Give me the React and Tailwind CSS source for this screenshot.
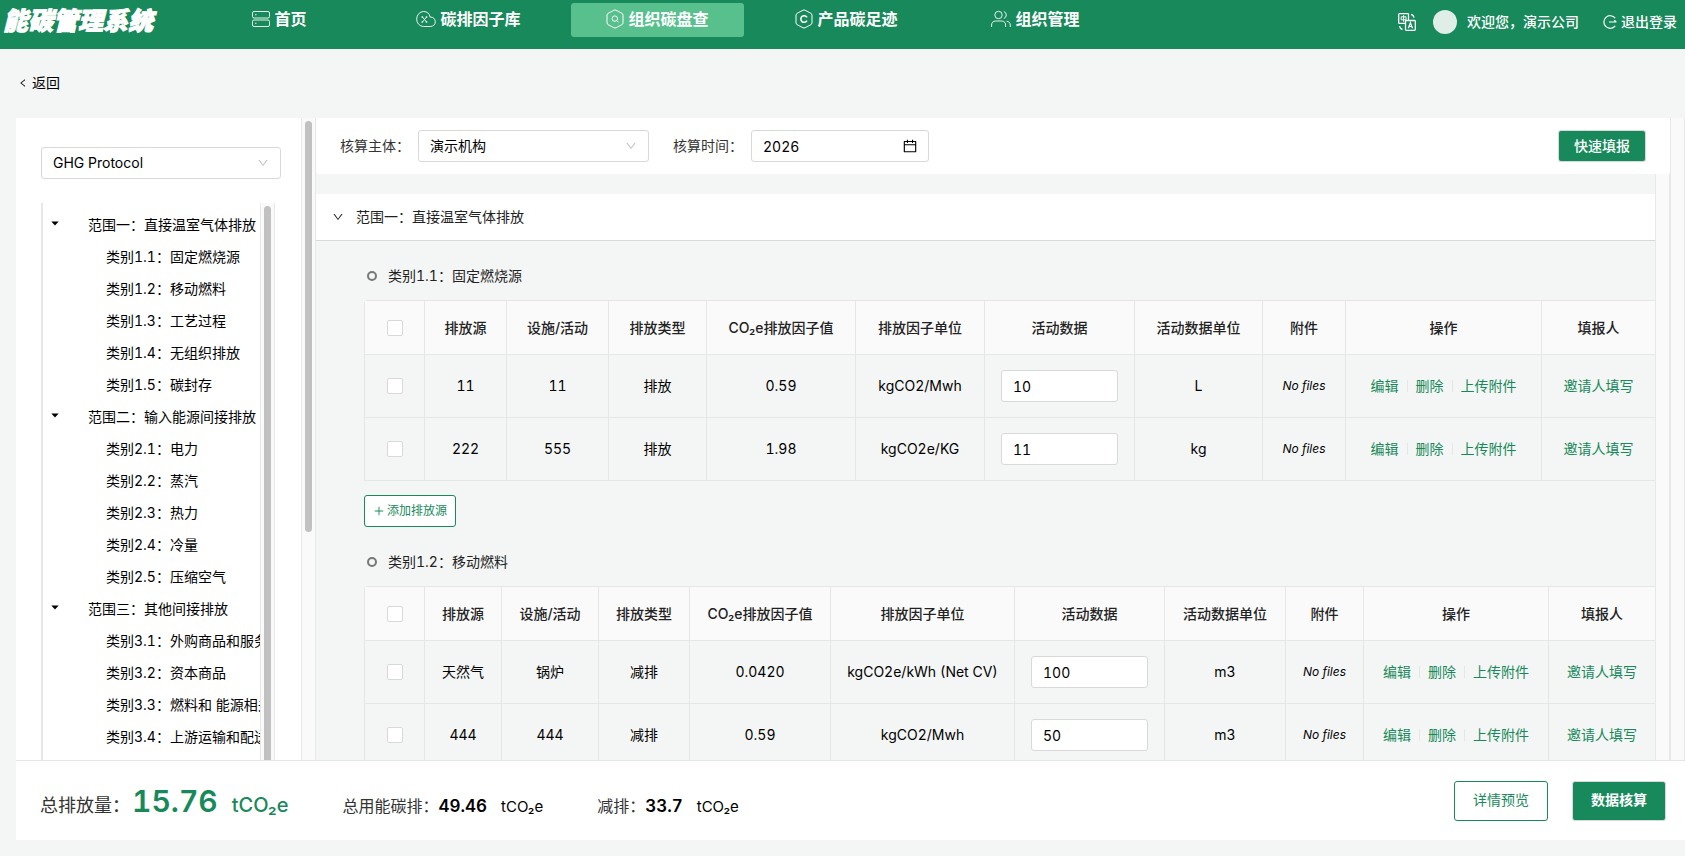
import React from "react";
import { AiOutlineCalendar, AiOutlineDown, AiOutlineLeft, AiOutlinePlus } from "react-icons/ai";

const HomeIcon = () => (
  <svg width="18" height="18" viewBox="0 0 18 18" fill="none" stroke="currentColor" opacity="0.9">
    <rect x="0.5" y="1.5" width="17" height="6.5" rx="1.5" />
    <rect x="0.5" y="10" width="17" height="6.5" rx="1.5" />
    <path d="M3 4.75h1.5M3 13.25h1.5" />
  </svg>
);

const CloudIcon = () => (
  <svg width="20" height="18" viewBox="0 0 20 18" fill="none" stroke="currentColor" opacity="0.9">
    <path d="M7.5 16.5A7 7.2 0 0 1 .7 9a7 7.5 0 0 1 7-7.5c3.300 0 5.800 2 6.300 5.500 3.500 0 5.300 2 5.300 4.800s-2 4.700-5 4.700z" />
    <path d="M6.500 7l4 5M10.500 7l-4 5" />
    <path d="M5.500 7h1.500M9.800 7h1.500M5.500 12h1.500M9.800 12h1.500" strokeWidth="1.300" />
  </svg>
);

const HexSearchIcon = () => (
  <svg width="18" height="20" viewBox="0 0 18 20" fill="none" stroke="currentColor">
    <path d="M8 1.200q1-.5 2 0l6 3.200q1 .6 1 1.700v7.800q0 1.100-1 1.700l-6 3.200q-1 .5-2 0l-6-3.200q-1-.6-1-1.700V6.100q0-1.100 1-1.700z" />
    <circle cx="8.800" cy="9.600" r="2.700" />
    <path d="M10.800 11.600l1.700 1.700" />
  </svg>
);

const HexCarbonIcon = () => (
  <svg width="18" height="20" viewBox="0 0 18 20" fill="none" stroke="currentColor">
    <path d="M8 1.200q1-.5 2 0l6 3.200q1 .6 1 1.700v7.800q0 1.100-1 1.700l-6 3.200q-1 .5-2 0l-6-3.200q-1-.6-1-1.700V6.100q0-1.100 1-1.700z" />
    <path d="M12 8.300A3.300 3.300 0 1 0 12 11.700" strokeWidth="1.600" />
  </svg>
);

const UsersIcon = () => (
  <svg width="20" height="18" viewBox="0 0 20 18" fill="none" stroke="currentColor" opacity="0.9">
    <circle cx="7.500" cy="5" r="3.700" />
    <path d="M.6 17v-2c0-2.500 1.700-4 4-4h6c2.300 0 4 1.500 4 4v2" />
    <path d="M12.800 1.500a3.700 3.700 0 0 1 0 7M15.600 11.200c2.300.4 3.700 1.600 3.700 3.800v2" />
  </svg>
);

const TranslateIcon = () => (
  <svg width="18" height="18" viewBox="0 0 18 18" fill="none" stroke="currentColor" strokeWidth="1.300">
    <path d="M7 10.400H1.500a.8.8 0 0 1-.8-.8V1.500a.8.8 0 0 1 .8-.8h8.200a.8.8 0 0 1 .8.8v5.700" />
    <rect x="7.500" y="7.500" width="9.800" height="9.800" rx="0.800" />
    <path d="M3.200 3.800h4.800v3H3.200zM5.600 2.200v6.600" strokeWidth="1" />
    <path d="M10.300 15.300l2.100-5.600 2.100 5.600M11 13.500h2.800" strokeWidth="1.200" />
    <path d="M13 1.300c1.500.3 2.700 1.500 3 3.300M1.500 13.200c.3 1.700 1.400 2.900 3 3.300" />
  </svg>
);

const LogoutIcon = () => (
  <svg width="14" height="14" viewBox="0 0 14 14" fill="none" stroke="currentColor" strokeWidth="1.200">
    <path d="M12.200 3.200A6.300 6.300 0 1 0 12.200 10.800" />
    <path d="M6 7h7.300M11.300 5.200L13.300 7" />
  </svg>
);

const navItems = [
  { label: "首页", icon: HomeIcon },
  { label: "碳排因子库", icon: CloudIcon },
  { label: "组织碳盘查", icon: HexSearchIcon, active: true },
  { label: "产品碳足迹", icon: HexCarbonIcon },
  { label: "组织管理", icon: UsersIcon },
];

const scopes = [
  {
    title: "范围一：直接温室气体排放",
    items: ["类别1.1：固定燃烧源", "类别1.2：移动燃料", "类别1.3：工艺过程", "类别1.4：无组织排放", "类别1.5：碳封存"],
  },
  {
    title: "范围二：输入能源间接排放",
    items: ["类别2.1：电力", "类别2.2：蒸汽", "类别2.3：热力", "类别2.4：冷量", "类别2.5：压缩空气"],
  },
  {
    title: "范围三：其他间接排放",
    items: ["类别3.1：外购商品和服务", "类别3.2：资本商品", "类别3.3：燃料和 能源相关活动", "类别3.4：上游运输和配送"],
  },
];

const headers = ["排放源", "设施/活动", "排放类型", "CO₂e排放因子值", "排放因子单位", "活动数据", "活动数据单位", "附件", "操作", "填报人"];

const categories = [
  {
    title: "类别1.1：固定燃烧源",
    canAdd: true,
    widths: [60, 82, 102, 98, 149, 129, 150, 128, 83, 196, 114],
    rows: [
      { source: "11", facility: "11", type: "排放", factor: "0.59", factorUnit: "kgCO2/Mwh", amount: "10", unit: "L" },
      { source: "222", facility: "555", type: "排放", factor: "1.98", factorUnit: "kgCO2e/KG", amount: "11", unit: "kg" },
    ],
  },
  {
    title: "类别1.2：移动燃料",
    canAdd: false,
    widths: [60, 77, 97, 91, 141, 184, 150, 121, 78, 185, 107],
    rows: [
      { source: "天然气", facility: "锅炉", type: "减排", factor: "0.0420", factorUnit: "kgCO2e/kWh (Net CV)", amount: "100", unit: "m3" },
      { source: "444", facility: "444", type: "减排", factor: "0.59", factorUnit: "kgCO2/Mwh", amount: "50", unit: "m3" },
    ],
  },
];

const Header = () => (
  <header className="flex h-[49px] shrink-0 items-start bg-[#18895a] pt-[3px] pr-2 text-white">
    <div className="flex h-[38px] w-[193px] shrink-0 items-center pl-[3px] text-[25px] font-black whitespace-nowrap italic [-webkit-text-stroke:1px_white]">
      能碳管理系统
    </div>
    <nav className="flex max-w-[929px] flex-1 gap-4">
      {navItems.map(({ label, icon: Icon, active }) => (
        <a
          key={label}
          href="#"
          className={`flex h-[34px] flex-1 items-center justify-center gap-1 rounded-[3px] pb-[2px] text-base font-bold whitespace-nowrap ${active ? "bg-[#57c08d]" : ""}`}
        >
          <Icon />
          {label}
        </a>
      ))}
    </nav>
    <div className="ml-auto flex h-[38px] items-center text-sm font-medium whitespace-nowrap">
      <button type="button" aria-label="切换语言" className="mr-[17px]">
        <TranslateIcon />
      </button>
      <span className="mr-[10px] size-6 rounded-full bg-[#dfeee6]" />
      <span className="mr-6">欢迎您，演示公司</span>
      <button type="button" className="flex items-center gap-1">
        <LogoutIcon />
        退出登录
      </button>
    </div>
  </header>
);

const SelectBox = ({ id, label, value, className }) => (
  <div className={`relative ${className}`}>
    <select
      id={id}
      aria-label={label}
      className="h-8 w-full appearance-none rounded-[3px] border border-[#d9d9d9] bg-white pl-[11px] pr-8 text-sm text-black outline-none"
    >
      <option>{value}</option>
    </select>
    <AiOutlineDown className="pointer-events-none absolute top-[10px] right-3 size-3 text-[#bfbfbf]" />
  </div>
);

const ScrollTrack = ({ children }) => (
  <div className="w-[15px] shrink-0 border-x border-[#e8e8e8] bg-[#fafafa] px-[3px] pt-[3px]">{children}</div>
);

const Sidebar = () => (
  <aside className="flex w-[285px] shrink-0 flex-col bg-white pt-[29px] pl-[25px]">
    <SelectBox id="standard" label="核算标准" value="GHG Protocol" className="w-[240px] shrink-0" />
    <div className="mt-6 flex min-h-0 w-[234px] flex-1">
      <ul className="min-w-0 flex-1 overflow-hidden border-l-2 border-[#e8e8e8] pt-[6px] text-sm leading-8 whitespace-nowrap text-black">
        {scopes.map((scope) => (
          <li key={scope.title}>
            <div className="flex items-center pl-2">
              <svg width="8" height="5" viewBox="0 0 8 5" className="mr-[29px] mb-1">
                <path d="M0.300 0.500h7.400L4 4.500z" fill="currentColor" />
              </svg>
              {scope.title}
            </div>
            <ul className="pl-[63px]">
              {scope.items.map((item) => (
                <li key={item}>{item}</li>
              ))}
            </ul>
          </li>
        ))}
      </ul>
      <ScrollTrack>
        <div className="h-full rounded-t-full bg-[#c1c1c1]" />
      </ScrollTrack>
    </div>
  </aside>
);

const FilterBar = () => (
  <div className="flex h-14 shrink-0 items-center rounded-b-[3px] bg-white pr-6 pl-6 text-sm">
    <label htmlFor="org" className="mr-2">核算主体：</label>
    <SelectBox id="org" label="核算主体" value="演示机构" className="mr-6 w-[231px]" />
    <label htmlFor="year" className="mr-2">核算时间：</label>
    <div className="relative w-[178px]">
      <input
        id="year"
        type="text"
        defaultValue="2026"
        className="h-8 w-full rounded-[3px] border border-[#d9d9d9] bg-white px-[11px] text-black outline-none"
      />
      <AiOutlineCalendar className="pointer-events-none absolute top-2 right-[11px] size-4 text-black" />
    </div>
    <button type="button" className="ml-auto h-8 rounded-[3px] border border-[#d9d9d9] bg-[#18895a] px-[15px] font-medium text-white">
      快速填报
    </button>
  </div>
);

const Checkbox = ({ label }) => (
  <input
    type="checkbox"
    aria-label={label}
    className="mx-auto block size-4 appearance-none rounded-[2px] border border-[#d9d9d9] bg-white"
  />
);

const cell = "border-r border-b border-[#e5e7e6] p-0 text-center";

const EmissionTable = ({ widths, rows }) => (
  <table className="w-full table-fixed border-separate border-spacing-0 rounded-tl-[4px] border-t border-l border-[#e5e7e6] text-sm whitespace-nowrap">
    <colgroup>
      {widths.map((width, index) => (
        <col key={index} style={{ width }} />
      ))}
    </colgroup>
    <thead className="bg-[#fafafa] text-[#222]">
      <tr className="h-[54px]">
        <th className={cell}>
          <Checkbox label="全选" />
        </th>
        {headers.map((header) => (
          <th key={header} className={`${cell} font-medium`}>{header}</th>
        ))}
      </tr>
    </thead>
    <tbody className="text-black">
      {rows.map((row) => (
        <tr key={row.source} className="h-[63px]">
          <td className={cell}>
            <Checkbox label={row.source} />
          </td>
          <td className={cell}>{row.source}</td>
          <td className={cell}>{row.facility}</td>
          <td className={cell}>{row.type}</td>
          <td className={cell}>{row.factor}</td>
          <td className={cell}>{row.factorUnit}</td>
          <td className={cell}>
            <div className="px-4">
              <input
                type="text"
                aria-label="活动数据"
                defaultValue={row.amount}
                className="block h-8 w-full rounded-[3px] border border-[#d9d9d9] bg-white px-[11px] outline-none"
              />
            </div>
          </td>
          <td className={cell}>{row.unit}</td>
          <td className={`${cell} text-xs italic`}>No files</td>
          <td className={cell}>
            <div className="flex items-center justify-center gap-2 text-[#18895a]">
              <a href="#">编辑</a>
              <span className="h-3 w-px bg-[#e5e7e6]" />
              <a href="#">删除</a>
              <span className="h-3 w-px bg-[#e5e7e6]" />
              <a href="#">上传附件</a>
            </div>
          </td>
          <td className={cell}>
            <a href="#" className="text-[#18895a]">邀请人填写</a>
          </td>
        </tr>
      ))}
    </tbody>
  </table>
);

const Category = ({ title, canAdd, widths, rows }) => (
  <section className="pl-12">
    <h3 className="flex h-6 items-center gap-[11px] pl-[3px] text-sm text-[#222]">
      <span className="size-[10px] rounded-full border-2 border-[#777]" />
      {title}
    </h3>
    <div className="mt-3">
      <EmissionTable widths={widths} rows={rows} />
    </div>
    {canAdd && (
      <button
        type="button"
        className="mt-[14px] mb-[23px] flex h-8 items-center gap-[2px] rounded-[3px] border border-[#18895a] bg-white px-2 text-xs text-[#18895a]"
      >
        <AiOutlinePlus className="size-3" />
        添加排放源
      </button>
    )}
  </section>
);

const Content = () => (
  <div className="flex min-w-0 flex-1 flex-col">
    <FilterBar />
    <div className="flex min-h-0 flex-1">
      <div className="min-w-0 flex-1 overflow-hidden pt-5">
        <button
          type="button"
          className="mb-[23px] flex h-[47px] w-full items-center gap-3 border-b border-[#d9d9d9] bg-white pl-4 text-sm text-[#222]"
        >
          <AiOutlineDown className="size-3" />
          范围一：直接温室气体排放
        </button>
        {categories.map((category) => (
          <Category key={category.title} {...category} />
        ))}
      </div>
      <ScrollTrack />
    </div>
  </div>
);

const Total = ({ label, value }) => (
  <div className="flex items-baseline text-base">
    <span className="text-[#333]">{label}</span>
    <span className="text-[17px] font-semibold">{value}</span>
    <span className="ml-[14px] text-[15px]">tCO₂e</span>
  </div>
);

const Footer = () => (
  <footer className="mb-4 ml-4 flex h-[80px] shrink-0 items-center border-t border-[#e5e7e6] bg-white pr-[19px] pl-6 whitespace-nowrap text-black">
    <div className="flex items-baseline gap-[54px] pt-[2px]">
      <div className="flex items-baseline">
        <span className="text-lg text-[#333]">总排放量：</span>
        <span className="ml-[2px] text-[30px] font-semibold text-[#18895a]">15.76</span>
        <span className="ml-[14px] text-xl font-medium text-[#18895a]">tCO₂e</span>
      </div>
      <Total label="总用能碳排：" value="49.46" />
      <Total label="减排：" value="33.7" />
    </div>
    <div className="ml-auto flex gap-6 text-sm">
      <button type="button" className="h-10 w-[94px] rounded-[3px] border border-[#18895a] bg-white pb-[2px] text-[#18895a]">
        详情预览
      </button>
      <button type="button" className="h-10 w-[94px] rounded-[3px] border border-[#d9d9d9] bg-[#18895a] pb-[2px] font-bold text-white">
        数据核算
      </button>
    </div>
  </footer>
);

const App = () => {
  return (
    <div className="flex h-screen flex-col overflow-hidden bg-[#f4f6f5] font-['Inter','Noto_Sans_CJK_SC',sans-serif] text-[#333] tabular-nums">
      <Header />
      <div className="flex h-[69px] shrink-0 items-center pb-[2px] pl-[18px] text-sm text-black">
        <a href="#" className="flex items-center gap-1">
          <AiOutlineLeft className="size-[10px]" />
          返回
        </a>
      </div>
      <div className="ml-4 flex min-h-0 flex-1">
        <Sidebar />
        <ScrollTrack>
          <div className="h-[411px] rounded-full bg-[#c1c1c1]" />
        </ScrollTrack>
        <Content />
        <ScrollTrack />
      </div>
      <Footer />
    </div>
  );
};

export default App;
